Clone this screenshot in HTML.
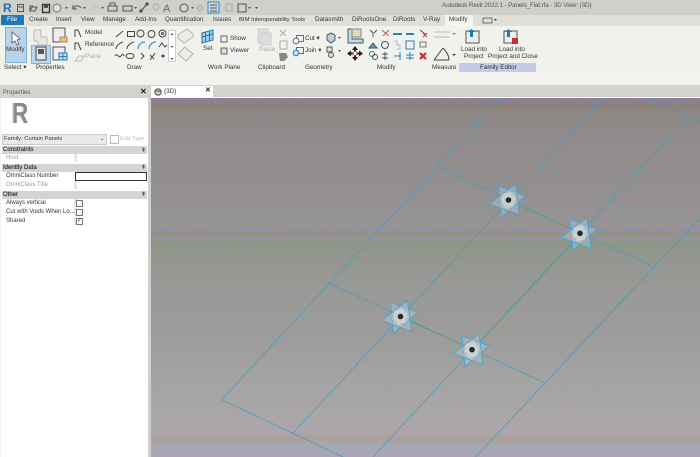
<!DOCTYPE html>
<html><head><meta charset="utf-8"><style>
html,body{margin:0;padding:0;width:700px;height:457px;overflow:hidden;background:#f2f2ee}
#w{position:absolute;left:0;top:0;width:700px;height:457px;filter:blur(.25px);font-family:"Liberation Sans",sans-serif;font-size:6.3px;color:#333}
.t{position:absolute;white-space:nowrap;line-height:8px}
.b{position:absolute}
.r{position:absolute;left:2px;width:145px;height:8px;background:#fff;font-size:6px;line-height:8px;white-space:nowrap}
.r i{position:absolute;left:72px;top:0;bottom:0;width:3px;background:#e6e6e6}
.h{position:absolute;left:2px;width:145px;height:8px;background:#d4d4d2;color:#333;font-size:6px;line-height:8px;-webkit-text-stroke:.2px #333}
.c{position:absolute;left:76px;width:5px;height:5px;border:1px solid #777;background:#fff}
</style></head><body><div id="w">
<div class="b" style="left:0;top:0;width:700px;height:15px;background:#cdd0cb"></div>
<div class="b" style="left:0;top:15px;width:700px;height:11px;background:#dfe0da"></div>
<div class="b" style="left:0;top:26px;width:700px;height:47px;background:#f1f1ed"></div>
<div class="b" style="left:0;top:73px;width:700px;height:12px;background:#f3f2ee"></div>
<div class="b" style="left:0;top:85px;width:700px;height:13px;background:#d2d3ce"></div>
<div class="b" style="left:1px;top:15px;width:23px;height:10px;background:#1f78b8"></div>
<div class="b" style="left:445px;top:15px;width:28px;height:11px;background:#f4f4f0"></div>
<div class="b" style="left:459px;top:63px;width:77px;height:9px;background:#c5cbe6"></div>
<div class="b" style="left:5px;top:27px;width:20px;height:34px;background:#b8d3ea;border:1px solid #7fb0d8"></div>
<div class="b" style="left:31px;top:45px;width:18px;height:17px;background:#bcd6ea;border:1px solid #7fb0d8"></div>

<div class="t" style="left:442px;top:2px;color:#555;letter-spacing:-.12px">Autodesk Revit 2022.1 - Panels_Flat.rfa - 3D View: {3D}</div>
<div class="t" style="left:7px;top:16px;color:#fff">File</div>
<div class="t" style="left:29px;top:16px">Create</div>
<div class="t" style="left:56px;top:16px">Insert</div>
<div class="t" style="left:81px;top:16px">View</div>
<div class="t" style="left:103px;top:16px">Manage</div>
<div class="t" style="left:135px;top:16px">Add-Ins</div>
<div class="t" style="left:165px;top:16px">Quantification</div>
<div class="t" style="left:213px;top:16px">Issues</div>
<div class="t" style="left:239px;top:16px;font-size:5.9px">BIM Interoperability Tools</div>
<div class="t" style="left:315px;top:16px">Datasmith</div>
<div class="t" style="left:352px;top:16px">DiRootsOne</div>
<div class="t" style="left:393px;top:16px">DiRoots</div>
<div class="t" style="left:423px;top:16px">V-Ray</div>
<div class="t" style="left:449px;top:16px">Modify</div>

<div class="t" style="left:6px;top:46px">Modify</div>
<div class="t" style="left:4px;top:64px">Select ▾</div>
<div class="t" style="left:36px;top:64px">Properties</div>
<div class="t" style="left:85px;top:29px">Model</div>
<div class="t" style="left:85px;top:41px">Reference</div>
<div class="t" style="left:85px;top:53px;color:#aaa">Plane</div>
<div class="t" style="left:127px;top:64px">Draw</div>
<div class="t" style="left:208px;top:64px">Work Plane</div>
<div class="t" style="left:203px;top:45px">Set</div>
<div class="t" style="left:230px;top:35px">Show</div>
<div class="t" style="left:230px;top:47px">Viewer</div>
<div class="t" style="left:259px;top:46px;color:#aaa">Paste</div>
<div class="t" style="left:258px;top:64px">Clipboard</div>
<div class="t" style="left:305px;top:35px">Cut ▾</div>
<div class="t" style="left:305px;top:47px">Join ▾</div>
<div class="t" style="left:305px;top:64px">Geometry</div>
<div class="t" style="left:377px;top:64px">Modify</div>
<div class="t" style="left:432px;top:64px">Measure</div>
<div class="t" style="left:461px;top:46px">Load into</div>
<div class="t" style="left:464px;top:53px">Project</div>
<div class="t" style="left:499px;top:46px">Load into</div>
<div class="t" style="left:488px;top:53px">Project and Close</div>
<div class="t" style="left:480px;top:64px">Family Editor</div>

<svg class="b" style="left:0;top:0" width="700" height="85" viewBox="0 0 700 85">
<text x="3" y="12" font-family="Liberation Sans" font-weight="bold" font-size="12" fill="#2a6ca8">R</text>
<g fill="none" stroke="#555" stroke-width="1">
<rect x="17.500" y="4.500" width="6" height="7"/><path d="M18 7h5"/>
<path d="M30 11l2-4h5l-2 4zM30 11V6h3"/>
<rect x="42.500" y="4.500" width="7" height="8" stroke="#333" stroke-width="1.400"/><rect x="44.500" y="5" width="3" height="2.500" fill="#333"/>
<circle cx="57" cy="8" r="4" fill="#ddd" stroke="#777"/>
<path d="M73 9c2-4 6-4 8-1M73 5v4h4"/><path d="M91 9c2-4 5-4 7-1" stroke="#bbb"/>
<rect x="108" y="6" width="9" height="5"/><path d="M110 6V3h5v3"/><rect x="123" y="6" width="9" height="5"/>
<path d="M141 11l6-7" stroke-width="1.200"/><circle cx="141" cy="11" r="1.200" fill="#555"/><circle cx="147" cy="4" r="1.200" fill="#555"/><circle cx="156" cy="7" r="3" stroke="#aaa"/>
<circle cx="184" cy="8" r="4"/><path d="M200 5l3 3-3 3-3-3z" stroke="#aaa"/>
<rect x="208" y="2" width="11" height="11" fill="#c5d8e8" stroke="#4c86b5"/><path d="M210 5h7M210 8h7M210 11h7"/>
<rect x="226" y="4" width="6" height="7" stroke="#aaa"/><rect x="238" y="4" width="8" height="8"/></g>
<path d="M65 7h3l-1.500 2zM83 7h3l-1.500 2zM101 7h3l-1.500 2zM134 7h3l-1.500 2zM191 7h3l-1.500 2zM248 7h3l-1.500 2zM255 7h3l-1.500 2z" fill="#555"/>
<text x="163" y="12" font-family="Liberation Sans" font-size="11" fill="#666">A</text>

<path d="M12 32l0 11 3-2 2 4 2-1-2-4 3-1z" fill="#fff" stroke="#555" stroke-width=".8"/>
<g fill="none" stroke="#888" stroke-width="1">
<path d="M34 30h7v7h6v8h-9v-4h-4z" fill="#e8e8e4" stroke="#bbb"/>
<rect x="53" y="28" width="12" height="14" fill="#eee" stroke="#555"/><rect x="60" y="37" width="7" height="5" fill="#e8c060" stroke="#a88"/>
<rect x="36" y="47" width="10" height="13" fill="#e2e6ea" stroke="#445"/><rect x="38" y="49" width="6" height="5" fill="#555" stroke="none"/>
<rect x="53" y="47" width="12" height="13" fill="#eee" stroke="#555"/><rect x="59" y="53" width="8" height="7" fill="#bcdcf0" stroke="#2a80b8"/><path d="M63 53v7M59 56.500h8" stroke="#2a80b8"/>
</g>
<g fill="none" stroke="#444" stroke-width="1">
<path d="M75 37V30h3l3 7M75 50V43h3l3 7"/><path d="M75 61l4-5h5l-3 5z" stroke="#bbb"/>
<path d="M116 37l7-6"/><rect x="127.500" y="31.500" width="7" height="5"/><circle cx="140.500" cy="33.500" r="3.500"/><circle cx="151.500" cy="34" r="3.500"/><circle cx="162.500" cy="33.500" r="3.500"/><circle cx="162.500" cy="33.500" r="1"/>
<path d="M116 49c0-3 3-6 7-7M127 49c0-3 3-6 7-7"/><path d="M138 49c0-4 3-7 7-7M149 49c0-4 3-7 7-7" stroke="#2a80b8"/><path d="M159 47l3-4 3 4 2-2"/>
<path d="M115 56c2-4 4 3 6 0s2-2 3 0"/><ellipse cx="130" cy="56" rx="4" ry="2.500"/><path d="M141 53l3 3-3 3"/><path d="M150 60l5-7M150 55l4 4"/><circle cx="163" cy="56" r="1" fill="#444"/>
</g>
<rect x="168.500" y="30.500" width="7" height="31" fill="#fff" stroke="#ccc"/>
<path d="M170.500 35h3l-1.500-2zM170.500 46h3l-1.500 2zM170.500 58h3l-1.500 2z" fill="#555"/>
<g fill="#ececea" stroke="#b5b5b5"><path d="M178 35l9-6 6 5v3l-9 6-6-5z"/><path d="M178 54l7-7 8 7-7 7z"/></g>
<g fill="none" stroke="#1f78b0"><path d="M202 33l11-3v10l-11 3zM205.500 32v10M209.500 31v10M202 37l11-3" fill="#a8d0ea"/></g>
<g fill="none" stroke="#666"><rect x="221" y="36" width="6" height="6" fill="#eee"/><rect x="221" y="48" width="6" height="6" fill="#cde"/></g>
<g fill="#ddd" stroke="#ccc"><rect x="258" y="29" width="10" height="14"/><rect x="261" y="33" width="10" height="12"/></g>
<g fill="none" stroke="#aaa"><path d="M280 30l6 6M286 30l-6 6"/><rect x="280" y="41" width="7" height="8"/></g><path d="M279 53h7l2 4-4 4h-4z" fill="#888"/>
<g fill="none" stroke="#2a80b8"><rect x="296.500" y="35.500" width="7" height="6"/><rect x="296.500" y="47.500" width="7" height="6"/></g>
<circle cx="296" cy="41" r="2.800" fill="#fff" stroke="#666"/><circle cx="296" cy="53" r="2.800" fill="#cde" stroke="#2a80b8"/>
<path d="M327 35l4-2 4 2v5l-4 3-4-3z" fill="#bcd" stroke="#555"/><g fill="#ddd" stroke="#555"><rect x="327" y="47" width="5" height="5"/><circle cx="331" cy="55" r="2.500"/></g>
<path d="M338 37h3l-1.500 2zM338 50h3l-1.500 2z" fill="#555"/>
<path d="M348 29h4v10h11v4h-15z" fill="#bcdcf0" stroke="#555"/><rect x="352" y="29" width="9" height="8" fill="#ddb" stroke="#888"/>
<g fill="#222"><path d="M355 46l-3 4h6zM355 61l-3-4h6zM347 53.500l4-3v6zM363 53.500l-4-3v6z"/><rect x="351" y="52.500" width="8" height="2"/><rect x="354" y="50" width="2" height="8"/></g>
<circle cx="355" cy="53.500" r="2" fill="#fff" stroke="#c55"/>
<g fill="none" stroke="#456">
<path d="M370 30l3 3v4M377 30l-3 3"/><path d="M382 30l7 6M389 30l-6 6" stroke="#a66"/>
<path d="M393 34h9" stroke="#2a80b8" stroke-width="2"/><path d="M406 34h8" stroke="#2a80b8" stroke-width="2"/>
<path d="M420 30l5 4" stroke="#555"/><path d="M423 33l4 4M427 33l-4 4" stroke="#c33"/>
<path d="M369 48l4-5 4 5z" fill="#5ca0c8" stroke="#456"/><circle cx="385" cy="45" r="3.500"/><path d="M394 41h3v4h3v4h-3" stroke="#bbb"/><rect x="406" y="41" width="8" height="8" stroke="#2a80b8"/><rect x="420" y="42" width="6" height="5" stroke="#777"/>
<circle cx="372" cy="54" r="2.500" stroke="#2a80b8"/><circle cx="375" cy="57" r="2.500"/><path d="M382 54h6M385 52v8M382 58h6"/><path d="M394 56h7M400 52v8" stroke="#2a80b8"/><path d="M406 55h8M406 58h8M410 52v8" stroke="#2a80b8"/>
</g>
<path d="M420 53l6 6M426 53l-6 6" stroke="#c22" stroke-width="2"/>
<g fill="none" stroke="#bbb"><path d="M434 32h16M434 37h16"/></g>
<path d="M434 60l9-12M434 60h15M443 48c3 3 6 7 6 12" fill="none" stroke="#444"/>
<path d="M452 54h4l-2 2z" fill="#444"/><path d="M452 33h4l-2 2z" fill="#888"/>
<g><rect x="466" y="31" width="13" height="12" fill="#eee" stroke="#555"/><path d="M470 37v-5h-2l3.500-3 3.500 3h-2v5z" fill="#1f78b8"/>
<rect x="504" y="31" width="13" height="12" fill="#eee" stroke="#555"/><path d="M507 37v-5h-2l3.500-3 3.500 3h-2v5z" fill="#1f78b8"/><rect x="512" y="38" width="6" height="6" fill="#b33"/></g>
<rect x="483" y="18" width="9" height="5" fill="#ddd" stroke="#555" stroke-width=".8"/><path d="M494 19h3l-1.500 2z" fill="#444"/>
</svg>

<!-- Panel -->
<div class="b" style="left:1px;top:98px;width:147px;height:359px;background:#fff"></div>
<div class="b" style="left:148px;top:98px;width:3px;height:359px;background:#cfcfcb"></div>
<div class="t" style="left:3px;top:89px;color:#555;font-size:6px">Properties</div>
<div class="t" style="left:140px;top:88px;font-weight:bold;font-size:8px;color:#222">✕</div>
<div class="t" style="left:12px;top:98px;font-size:29px;line-height:32px;font-weight:bold;color:#8a8a8a;transform:scaleX(.78);transform-origin:0 0;text-shadow:-2px 0 1px #ddd">R</div>
<div class="b" style="left:2px;top:134px;width:103px;height:9px;background:#eaeae8;border:1px solid #c8c8c8"></div>
<div class="t" style="left:4px;top:135px;font-size:5.8px">Family: Curtain Panels</div>
<div class="t" style="left:100px;top:135px;font-size:5.5px">⌄</div>
<div class="t" style="left:120px;top:135px;color:#bbb;font-size:5.9px">Edit Type</div>
<div class="b" style="left:110px;top:135px;width:7px;height:7px;border:1px solid #bbb"></div>
<div class="h" style="top:146px"><span style="margin-left:1px">Constraints</span></div>
<div class="r" style="top:154px"><i></i><span style="margin-left:4px;color:#999">Host</span></div>
<div class="h" style="top:164px"><span style="margin-left:1px">Identity Data</span></div>
<div class="r" style="top:172px"><span style="margin-left:4px">OmniClass Number</span></div>
<div class="b" style="left:75px;top:172px;width:70px;height:7px;border:1px solid #333;background:#fff"></div>
<div class="r" style="top:181px"><i></i><span style="margin-left:4px;color:#999">OmniClass Title</span></div>
<div class="h" style="top:191px"><span style="margin-left:1px">Other</span></div>
<div class="r" style="top:199px"><i></i><span style="margin-left:4px">Always vertical</span></div>
<div class="r" style="top:208px"><i></i><span style="margin-left:4px">Cut with Voids When Lo...</span></div>
<div class="r" style="top:217px"><i></i><span style="margin-left:4px">Shared</span></div>
<div class="c" style="top:200px"></div><div class="c" style="top:209px"></div>
<div class="c" style="top:218px;font-size:6px;line-height:5px;color:#333">✓</div>
<div class="t" style="left:141px;top:147px;font-size:6px">⇞</div>
<div class="t" style="left:141px;top:164px;font-size:6px">⇞</div>
<div class="t" style="left:141px;top:191px;font-size:6px">⇞</div>

<!-- view tab -->
<div class="b" style="left:151px;top:86px;width:62px;height:12px;background:#fff"></div>
<div class="t" style="left:164px;top:88px">{3D}</div>
<div class="t" style="left:205px;top:87px;font-weight:bold;font-size:7px;color:#222">✕</div>
<svg class="b" style="left:154px;top:88px" width="8" height="8"><circle cx="4" cy="4" r="3.200" fill="#ccc" stroke="#555"/><path d="M1 3h6" stroke="#555"/></svg>
<div class="b" style="left:151px;top:97px;width:549px;height:1px;background:#fff"></div>

<!-- Viewport -->
<div class="b" style="left:151px;top:98px;width:549px;height:359px;background:linear-gradient(180deg,#8e7b90 0,#887f92 4px,#8b8070 9px,#8c8584 14px,#8f8a8a 45px,#928e8e 100px,#949294 128px,#9a8aa0 131px,#88957f 136px,#9b8c9e 141px,#87957f 145px,#90948c 152px,#979795 190px,#9c9b9a 240px,#a5a3a2 290px,#a9a6a6 320px,#aca6ac 332px,#aa9f98 340px,#a6a6ae 347px,#a2a8b4 352px,#b0a0b6 359px)"></div>

<svg class="b" style="left:0;top:0" width="700" height="457" viewBox="0 0 700 457">
<defs>
<filter id="nz" x="0" y="0" width="100%" height="100%"><feTurbulence type="fractalNoise" baseFrequency=".9" numOctaves="2" seed="4"/><feColorMatrix type="saturate" values="1.600"/></filter>
<g id="st">
<path d="M-10-14L17-4L-7 17Z" fill="#d4dede" fill-opacity=".3" stroke="#3fa4de" stroke-width=".9"/>
<path d="M7-16L11 15L-19 4Z" fill="#d4dede" fill-opacity=".3" stroke="#3fa4de" stroke-width=".9"/>
<path d="M-6-6L2-8L7-2L5 6L-3 8L-7 2Z" fill="#e4ecec" fill-opacity=".45"/>
<circle r="2.800" fill="#222a30"/>
</g>
</defs>
<rect x="151" y="98" width="549" height="359" filter="url(#nz)" opacity=".1"/>
<g fill="none" stroke="#3d9cc6" stroke-width=".7">
<path d="M221.600 399.700L343 457M221.600 399.700L500.800 98.300"/>
<path d="M293 433L602.500 100"/>
<path d="M373 457L690 115"/>
<path d="M475.500 457L700 218"/>
<path d="M329.600 283.300L543.500 382.300"/>
<path d="M438.300 167L651.600 266"/>
<path d="M650 98.300L700 122"/>
</g>
<g fill="none" stroke="#6d9c62" stroke-width=".8">
<path d="M411 322L459 343M502 208L440 275M522 207L567 227M571 245L480 342"/>
</g>
<use href="#st" x="400.500" y="316.500"/>
<use href="#st" x="472" y="349.700"/>
<use href="#st" x="508.500" y="200"/>
<use href="#st" x="580" y="233.300"/>
</svg>
</div></body></html>
